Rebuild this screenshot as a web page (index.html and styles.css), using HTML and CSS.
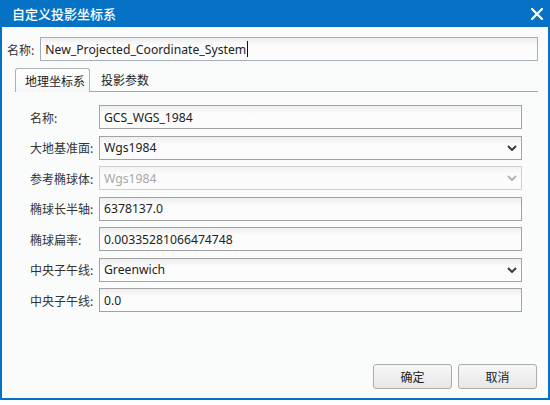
FILE: index.html
```html
<!DOCTYPE html>
<html lang="zh-CN">
<head>
<meta charset="utf-8">
<title>自定义投影坐标系</title>
<link rel="stylesheet" href="styles.css">
</head>
<body>
<div class="dialog">
  <div class="titlebar">
    <span class="title">自定义投影坐标系</span>
    <svg class="close" width="12" height="12" viewBox="0 0 12 12"><path d="M1 1 L11 11 M11 1 L1 11" stroke="#fff" stroke-width="2.2" stroke-linecap="square" fill="none"/></svg>
  </div>
  <div class="content">
    <div class="name-row">
      <span class="lbl">名称:</span>
      <div class="field name-field"><span class="txt">New_Projected_Coordinate_System</span><span class="caret"></span></div>
    </div>
    <div class="tabs">
      <div class="tab active">地理坐标系</div>
      <div class="tab">投影参数</div>
    </div>
    <div class="panel">
      <div class="row"><span class="flabel">名称:</span><div class="field">GCS_WGS_1984</div></div>
      <div class="row"><span class="flabel">大地基准面:</span><div class="field select"><span>Wgs1984</span><svg class="chev" width="10" height="6" viewBox="0 0 10 6"><path d="M1 1 L5 5 L9 1" stroke="#3c3c3c" stroke-width="2" fill="none"/></svg></div></div>
      <div class="row"><span class="flabel">参考椭球体:</span><div class="field select disabled"><span>Wgs1984</span><svg class="chev" width="10" height="6" viewBox="0 0 10 6"><path d="M1 1 L5 5 L9 1" stroke="#b4b4b4" stroke-width="2" fill="none"/></svg></div></div>
      <div class="row"><span class="flabel">椭球长半轴:</span><div class="field">6378137.0</div></div>
      <div class="row"><span class="flabel">椭球扁率:</span><div class="field">0.00335281066474748</div></div>
      <div class="row"><span class="flabel">中央子午线:</span><div class="field select"><span>Greenwich</span><svg class="chev" width="10" height="6" viewBox="0 0 10 6"><path d="M1 1 L5 5 L9 1" stroke="#3c3c3c" stroke-width="2" fill="none"/></svg></div></div>
      <div class="row"><span class="flabel">中央子午线:</span><div class="field">0.0</div></div>
    </div>
    <div class="buttons">
      <div class="btn">确定</div>
      <div class="btn">取消</div>
    </div>
  </div>
</div>
</body>
</html>
```

FILE: styles.css
```css
html, body {
  margin: 0;
  background: #ffffff;
}

.dialog {
  width: 550px;
  height: 400px;
  box-sizing: border-box;
  border: 2px solid #0672c5;
  border-top: 0;
  background: #fafbfb;
  display: flex;
  flex-direction: column;
  font-family: "Noto Sans", "Noto Sans CJK SC", sans-serif;
  color: #222;
}

.titlebar {
  height: 27px;
  flex: none;
  background: #0672c5;
  display: flex;
  align-items: center;
  justify-content: space-between;
  padding: 0 5px 0 10px;
}

.title {
  color: #fff;
  font-family: "Noto Sans CJK SC", sans-serif;
  font-size: 13px;
  font-weight: 500;
}

.close {
  display: block;
}

.content {
  flex: 1;
  display: flex;
  flex-direction: column;
  padding: 10px 10px 9px 5px;
}

.name-row {
  display: flex;
  align-items: center;
  gap: 6px;
}

.lbl, .flabel {
  font-family: "Noto Sans CJK SC", sans-serif;
  font-size: 12px;
  color: #333;
}

.field {
  flex: 1;
  height: 24px;
  box-sizing: border-box;
  border: 1px solid #a2a2a2;
  background: linear-gradient(#eeeeee, #fcfcfc 35%);
  display: flex;
  align-items: center;
  padding: 0 4px 0 4px;
  font-size: 12.2px;
  color: #222;
  white-space: nowrap;
}

.name-field {
  border-color: #a6adb8;
}

.caret {
  width: 1px;
  height: 16px;
  background: #111;
  margin-left: 1px;
}

.tabs {
  margin: 7px 0 0 8px;
  display: flex;
  border-bottom: 1px solid #a8a8a8;
  height: 23px;
}

.tab {
  font-family: "Noto Sans CJK SC", sans-serif;
  font-size: 12px;
  color: #222;
  display: flex;
  align-items: center;
  padding: 0 5px 0 11px;
}

.tab.active {
  width: 75px;
  box-sizing: border-box;
  padding: 0 0 0 9px;
  border: 1px solid #aab0b8;
  border-bottom: 0;
  border-radius: 3px 3px 0 0;
  background: linear-gradient(#ffffff, #f6f7f8);
  margin-bottom: -1px;
}

.panel {
  display: flex;
  flex-direction: column;
  gap: 6.5px;
  padding: 13px 16px 0 23px;
}

.row {
  display: flex;
  align-items: center;
}

.flabel {
  width: 69px;
  flex: none;
}

.select {
  justify-content: space-between;
}

.chev {
  display: block;
}

.disabled {
  border-color: #cfcfcf;
  color: #a8a8a8;
  background: linear-gradient(#f3f3f3, #fbfbfb 35%);
}

.buttons {
  margin-top: auto;
  display: flex;
  justify-content: flex-end;
  gap: 6px;
  padding-right: 1px;
}

.btn {
  width: 79px;
  height: 25px;
  box-sizing: border-box;
  border: 1px solid #acacac;
  border-radius: 3px;
  background: linear-gradient(#f7f7f7, #e7e7e7);
  display: flex;
  align-items: center;
  justify-content: center;
  font-family: "Noto Sans CJK SC", sans-serif;
  font-size: 12px;
  color: #222;
}
```
